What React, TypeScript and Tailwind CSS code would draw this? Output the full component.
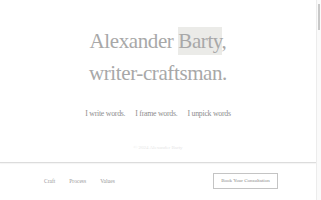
import React from "react";

export default function App() {
  return (
    <div className="flex h-[200px] w-[321px] overflow-hidden bg-white font-['Liberation_Serif']">
      <div className="flex w-[316px] flex-col">
        <section className="flex h-[162px] flex-col items-center">
          <h1 className="mt-[25px] text-center font-['Liberation_Serif'] text-[21px] font-normal leading-[32px] tracking-[-0.4px] text-[#a8a8a8]">
            Alexander <span className="bg-[#ebebe8] py-[2px]">Barty</span>,
            <br />
            writer-craftsman.
          </h1>
          <div className="mt-[20px] flex gap-[10px] font-['Liberation_Serif'] text-[7.8px] leading-[10px] tracking-[-0.25px] text-[#8e8e8e]">
            <span>I write words.</span>
            <span>I frame words.</span>
            <span>I unpick words</span>
          </div>
          <div className="mt-[26px] font-['Liberation_Serif'] text-[5px] leading-[6px] text-[#e6e6e6]">© 2024 Alexander Barty</div>
        </section>
        <div className="h-[1px] bg-[#dcdcdc] shadow-[0_1px_1px_rgba(0,0,0,0.05)]" />
        <footer className="flex flex-1 items-center justify-between pl-[44px] pr-[38px] pb-[1px] font-['Liberation_Serif']">
          <nav className="flex gap-[14px] text-[5.5px] text-[#9a9a9a]">
            <span>Craft</span>
            <span>Process</span>
            <span>Values</span>
          </nav>
          <div className="flex h-[16px] w-[65px] items-center justify-center border border-[#c4c4c4] text-[5px] text-[#8a8a8a]">
            Book Your Consultation
          </div>
        </footer>
      </div>
      <div className="flex w-[5px] flex-col border-l border-[#ececec] bg-[#fafafa] pt-[4px]">
        <div className="ml-[1px] h-[26px] w-[2px] bg-[#c8c8c8]" />
      </div>
    </div>
  );
}
